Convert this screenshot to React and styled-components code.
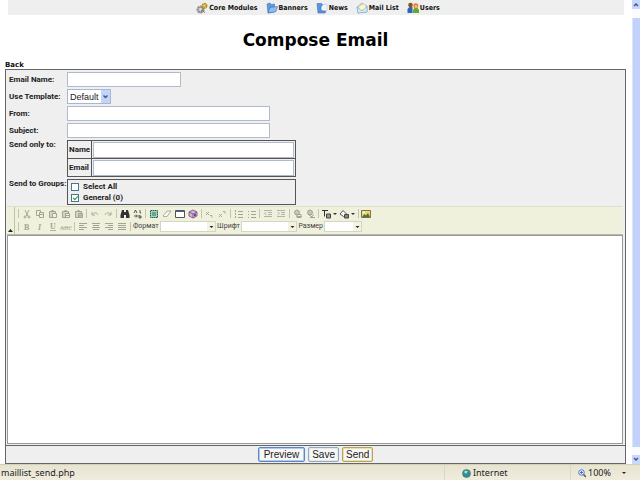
import React from "react";
import styled, { createGlobalStyle, css } from "styled-components";

const Global = createGlobalStyle`
  *, *::before, *::after { box-sizing: border-box; }
  body { margin: 0; background: #fff; color: #111; font-family: "Liberation Sans", Arial, sans-serif; }
`;

const Shell = styled.div`
  display: flex;
  flex-direction: column;
  min-height: 100vh;
`;
const Viewport = styled.div`
  display: flex;
  flex: 1;
`;
const Page = styled.main`
  display: flex;
  flex-direction: column;
  flex: 1;
  min-width: 0;
  padding: 0 6px 0 5px;
`;

const Nav = styled.nav`
  display: flex;
  justify-content: center;
  align-items: center;
  gap: 8px;
  height: 15px;
  margin: 0 2px 0 3px;
  padding-left: 4px;
  background: #efefef;
`;
const NavLink = styled.a`
  display: flex;
  align-items: center;
  gap: 1px;
  color: #111;
  font: bold 7px/14px "DejaVu Sans Condensed", "DejaVu Sans", Verdana, sans-serif;
  text-decoration: none;
  white-space: nowrap;
`;
const Title = styled.h1`
  margin: 15px 0 11px;
  color: #000;
  font: bold 17px/21px "DejaVu Sans", Verdana, sans-serif;
  text-align: center;
`;
const BackLink = styled.a`
  align-self: flex-start;
  color: #111;
  font: bold 7px/7px "DejaVu Sans", Verdana, sans-serif;
  text-decoration: none;
`;

const Panel = styled.form`
  display: flex;
  flex-direction: column;
  flex: 1;
  border: 1px solid #666;
  background: #efefef;
`;
const Fields = styled.div`
  display: grid;
  grid-template-columns: 58px 1fr;
  row-gap: 2px;
  padding: 2px 3px 1px;
`;
const labelFont = css`
  font: bold 8px/10px Roboto, Arial, sans-serif;
  color: #222;
  white-space: nowrap;
`;
const Label = styled.label`
  ${labelFont}
  padding-top: ${(p) => (p.$top ? 0 : 3)}px;
`;
const TextInput = styled.input`
  display: block;
  width: ${(p) => (p.$width ? `${p.$width}px` : "100%")};
  height: ${(p) => (p.$width ? 15 : 16)}px;
  padding: 0 2px;
  border: 1px solid #b0bccb;
  background: #fff;
  font: 10px/12px "Liberation Sans", Arial, sans-serif;
`;
const SelectWrap = styled.div`
  position: relative;
  width: 44px;
  height: 15px;
  svg {
    position: absolute;
    top: 1px;
    right: 1px;
    pointer-events: none;
  }
`;
const Select = styled.select`
  display: block;
  appearance: none;
  width: 100%;
  height: 15px;
  padding: 0 2px;
  border: 1px solid #a5b8d0;
  border-radius: 0;
  background: #fff;
  color: #222;
  font: 9px/12px "Liberation Sans", Arial, sans-serif;
`;
const Recipients = styled.table`
  width: 229px;
  border-collapse: collapse;
  th, td { border: 1px solid #555; }
  th { ${labelFont} width: 24px; padding: 0 1px; text-align: left; }
  td { padding: 1px 1px 0; }
`;
const Groups = styled.div`
  width: 229px;
  padding: 1px 3px;
  border: 1px solid #555;
`;
const Check = styled.label`
  ${labelFont}
  display: flex;
  align-items: center;
  gap: 4px;
  height: 11px;
`;
const CheckBox = styled.input`
  appearance: none;
  display: grid;
  place-items: center;
  width: 8px;
  height: 8px;
  margin: 0;
  border: 1px solid #4b7596;
  background: #fff;
  &:checked::after {
    content: "";
    width: 5px;
    height: 3px;
    border: solid #21a121;
    border-width: 0 0 1px 1px;
    transform: rotate(-45deg);
  }
`;

const Editor = styled.div`
  display: flex;
  flex-direction: column;
  flex: 1;
  margin: 0 2px 0 1px;
`;
const Toolbar = styled.div`
  display: flex;
  height: 29px;
  border-top: 1px solid #dedfcb;
  border-bottom: 1px solid #b9baa5;
  background: #f0f1dc;
`;
const Collapse = styled.button`
  display: flex;
  align-items: flex-end;
  width: 8px;
  padding: 0 0 1px 1px;
  border: 0;
  border-right: 1px solid #c2c3ad;
  background: #f0f1dc;
`;
const ToolRows = styled.div`
  display: grid;
  grid-template-rows: 13px 13px;
  padding: 0 0 0 3px;
`;
const ToolRow = styled.div`
  display: flex;
  align-items: center;
  justify-content: space-between;
  width: ${(p) => p.$width}px;
`;
const Divider = styled.span`
  width: 1px;
  height: 9px;
  background: #c3c4b1;
`;
const ToolGroup = styled.div`
  display: flex;
`;
const Tool = styled.button`
  display: flex;
  align-items: center;
  justify-content: center;
  width: ${(p) => (p.$wide ? 18 : 13)}px;
  height: 12px;
  padding: 0;
  border: 0;
  background: none;
  color: ${(p) => (p.$active ? "#333" : "#a3a497")};
`;
const Combo = styled.label`
  display: flex;
  align-items: center;
  gap: 1px;
  color: #444;
  font: 7px/11px Roboto, Arial, sans-serif;
`;
const ComboBox = styled.span`
  position: relative;
  svg { position: absolute; top: 1px; right: 1px; pointer-events: none; }
`;
const ComboSelect = styled.select`
  display: block;
  appearance: none;
  width: ${(p) => p.$width}px;
  height: 11px;
  border: 1px solid #d4d5c2;
  border-radius: 0;
  background: #fff;
  font: 7px/9px "Liberation Sans", Arial, sans-serif;
`;
const Message = styled.textarea`
  display: block;
  flex: 1;
  width: 100%;
  min-height: 60px;
  padding: 4px;
  border: 1px solid #999;
  background: #fff;
  font: 10px/13px "Liberation Sans", Arial, sans-serif;
  resize: none;
`;
const Actions = styled.div`
  display: flex;
  justify-content: center;
  gap: 3px;
  margin-top: 1px;
  padding: 1px 0;
  border-top: 1px solid #666;
`;
const tones = {
  focus: "#5d86c4",
  plain: "#8fa9c4",
  warm: "#b7a35b",
};
const Button = styled.button`
  height: 15px;
  padding: 0 ${(p) => (p.$roomy ? 5 : 3)}px;
  border: 1px solid ${(p) => tones[p.$tone]};
  border-radius: 2px;
  box-shadow: inset 0 0 0 1px ${(p) => (p.$tone === "focus" ? "#b3caf0" : p.$tone === "warm" ? "#f0dfa8" : "#e3e9f1")};
  background: #f7f7f5;
  color: #222;
  font: 10px/12px "Liberation Sans", Arial, sans-serif;
`;

const ScrollBar = styled.div`
  display: flex;
  flex-direction: column;
  width: 8px;
  background: #fafbfe;
`;
const ScrollButton = styled.button`
  display: grid;
  place-items: center;
  width: 8px;
  height: 9px;
  padding: 0;
  border: 0;
  background: #c8d7fb;
`;
const Thumb = styled.div`
  flex: 1;
  margin: 9px 0 8px;
  border-left: 1px solid #dce5fc;
  background: #c3d2fa;
`;

const StatusBar = styled.footer`
  display: grid;
  grid-template-columns: 1fr 126px 69px;
  height: 16px;
  border-top: 1px solid #d3cfbb;
  background: linear-gradient(#e7e4d1, #efecdd);
  color: #222;
  font: 9px/16px "Noto Sans", Tahoma, sans-serif;
`;
const StatusCell = styled.div`
  display: flex;
  align-items: center;
  gap: 2px;
  padding-left: ${(p) => p.$pad}px;
  border-right: ${(p) => (p.$last ? "0" : "1px solid #dcd8c5")};
`;
const Caret = styled.span`
  margin: 0 14px 0 auto;
  border: solid transparent;
  border-width: 2px 2px 0;
  border-top-color: #222;
`;

const Svg = ({ w = 10, h = 10, children }) => (
  <svg width={w} height={h} viewBox={`0 0 ${w} ${h}`} fill="none" stroke="currentColor" aria-hidden="true">
    {children}
  </svg>
);

const NavArt = {
  modules: (
    <Svg w={12} h={12}>
      <circle cx="4.5" cy="7.5" r="2.8" stroke="#8b8b84" strokeWidth="2.4" strokeDasharray="2 .5" fill="#ddd" />
      <circle cx="8.5" cy="3.8" r="2" stroke="#b58c1d" strokeWidth="2" strokeDasharray="1.600 .4" fill="#f6df7c" />
      <path d="M5 8l4 2.5" stroke="#777" />
    </Svg>
  ),
  banners: (
    <Svg w={12} h={12}>
      <path d="M1 2l3-1 1.500 1.500 3-.5v8L2 11z" fill="#5f97dc" stroke="#4479bd" strokeWidth=".6" />
      <path d="M2 11l2-5.500 7.500-1L10 9.500z" fill="#8ebdf2" stroke="#3d72b8" strokeWidth=".6" />
    </Svg>
  ),
  news: (
    <Svg w={12} h={12}>
      <path d="M4 2.500h7v6H5z" fill="#eef5fe" stroke="#b7c9e2" strokeWidth=".6" />
      <path d="M1 1.500h4.500l1 1.500-1.500 2v3.500l5 1L9 11H2z" fill="#5b92da" stroke="#3c70b8" strokeWidth=".6" />
    </Svg>
  ),
  mail: (
    <Svg w={12} h={12}>
      <path d="M1 5l5-4 5 3v6L2 11z" fill="#b9d9ee" stroke="#76a9ce" strokeWidth=".6" />
      <path d="M3 4l5-2 2 2-.5 3-4 1.500L3 7z" fill="#fff5c9" stroke="#d6c98a" strokeWidth=".5" />
      <path d="M1 5l5 4 5-4.500v5.500L2 11z" fill="#d7ebf8" stroke="#76a9ce" strokeWidth=".6" />
    </Svg>
  ),
  users: (
    <Svg w={12} h={12}>
      <path d="M.5 11V7l2-2h3v6z" fill="#2e64b3" stroke="none" />
      <path d="M6 11V8l1.500-2h3l1.500 2v3z" fill="#68a533" stroke="none" />
      <circle cx="3.500" cy="3" r="2.300" fill="#8f4f1b" stroke="none" />
      <circle cx="8.800" cy="3.800" r="2.500" fill="#d8862d" stroke="none" />
      <circle cx="9" cy="4.500" r="1.300" fill="#f6c37f" stroke="none" />
    </Svg>
  ),
};

const paste = (extra) => (
  <Svg>
    <path d="M1.500 2.500h6v6h-6zM3.500 1.500h2" fill="#d5d6c6" />
    <path d="M4.500 4.500h4v4h-4z" fill="#f0f1dc" />
    {extra}
  </Svg>
);
const lines = (xs) => (
  <Svg>
    {xs.map(([a, b], i) => (
      <path key={i} d={`M${a} ${1.5 + i * 2}H${b}`} />
    ))}
  </Svg>
);
const SmallText = styled.text`
  fill: currentColor;
  stroke: none;
  font: ${(p) => p.$style || "bold"} ${(p) => p.$size || 8}px "Liberation Serif", serif;
`;
const caret = <path d="M12 4h4l-2 2z" fill="currentColor" stroke="none" />;

const Art = {
  cut: <Svg><path d="M3 1l3 6M7 1L4 7" /><circle cx="3" cy="8" r="1" /><circle cx="7" cy="8" r="1" /></Svg>,
  copy: <Svg><path d="M1.500 1.500h4v5h-4z" /><path d="M4.500 3.500h4v5h-4zM5 5.500h3" fill="#f0f1dc" /></Svg>,
  paste: paste(null),
  pasteText: paste(<path d="M5 6.500h3" />),
  pasteWord: paste(<path d="M5 5l1 3 1-3 1 3" strokeWidth=".8" />),
  undo: <Svg><path d="M2 3v3h3M2 6c2-3 5-3 6 0" strokeWidth=".9" /></Svg>,
  redo: <Svg><path d="M8 3v3H5M8 6C6 3 3 3 2 6" strokeWidth=".9" /></Svg>,
  find: <Svg><path d="M2 1h2v2h2V1h2l1.500 5v3H6V6H4v3H.500V6z" fill="#333" stroke="none" /></Svg>,
  replace: <Svg><path d="M1 4l1.500-3L4 4M6 6v3h2V7H6M7 1v3h1M1 7h3M3 5.500L4.500 7 3 8.500" strokeWidth=".8" /></Svg>,
  table: <Svg><path d="M1.500 1.500h7v7h-7z" fill="#a7d5c4" stroke="#31584e" strokeDasharray="1.500 .5" /><path d="M3 3h4v4H3z" fill="#62a994" stroke="none" /></Svg>,
  eraser: <Svg><path d="M1 7l4-5h4L5 7.500H2z" fill="#fafaf0" stroke="#999" strokeWidth=".8" /></Svg>,
  window: <Svg><path d="M.5 1.500h9v7h-9z" fill="#fff" stroke="#555" /><path d="M1 2.500h8" stroke="#4a5f9a" /></Svg>,
  cube: <Svg><path d="M1 3l4-2 4 2v4L5 9 1 7z" fill="#d9b3da" stroke="#7d5486" strokeWidth=".9" /><path d="M1 3l4 2 4-2M5 5v4" stroke="#7d5486" strokeWidth=".9" /><path d="M6 5.500l2-1v2l-2 1z" fill="#5a3d6e" stroke="none" /></Svg>,
  sub: <Svg><path d="M2 3l3 3M5 3L2 6M6 6.500h2v2" strokeWidth=".9" /></Svg>,
  sup: <Svg><path d="M2 5l3 3M5 5L2 8M6 2.500h2v2" strokeWidth=".9" /></Svg>,
  ol: <Svg><path d="M1.500 1v2M1.500 4v2M1.500 7v2M4 2.500h5M4 5.500h5M4 8.500h5" /></Svg>,
  ul: <Svg><path d="M1 2.500h1M1 5.500h1M1 8.500h1M4 2.500h5M4 5.500h5M4 8.500h5" /></Svg>,
  outdent: <Svg><path d="M1 1.500h8M5 3.500h4M5 5.500h4M1 7.500h8M3.500 3L1.500 4.500l2 1.500" strokeWidth=".8" /></Svg>,
  indent: <Svg><path d="M1 1.500h8M5 3.500h4M5 5.500h4M1 7.500h8M1.500 3l2 1.500-2 1.500" strokeWidth=".8" /></Svg>,
  link: <Svg><circle cx="4" cy="3.500" r="2.500" fill="#c5c6b8" /><path d="M3.500 7.500h5M4 5.500h4v3H4z" /></Svg>,
  unlink: <Svg><circle cx="4" cy="3.500" r="2.500" fill="#c5c6b8" /><path d="M4 8.500h5M3 6l5 3M8 5.500L4 9" /></Svg>,
  color: <Svg w={16}><path d="M1 1.500h6M3.500 1.500v6" stroke="#333" /><path d="M5.500 5h4v4h-4z" fill="#999" stroke="#444" />{caret}</Svg>,
  fill: <Svg w={16}><path d="M1 5l3-3.500L7.500 5 4.500 7.500z" fill="#fff" stroke="#555" /><path d="M5.500 5.500h4v3.500h-4z" fill="#888" stroke="#444" />{caret}</Svg>,
  image: <Svg><path d="M.5 1.500h9v7h-9z" fill="#f4d76d" stroke="#7d744a" /><path d="M1 8l2.500-3L5 6.500 7 4l2 4z" fill="#4b7249" stroke="none" /><circle cx="3" cy="3.500" r="1" fill="#fff" stroke="none" /></Svg>,
  bold: <Svg><SmallText x="2" y="8">B</SmallText></Svg>,
  italic: <Svg><SmallText x="3" y="8" $style="italic bold">I</SmallText></Svg>,
  underline: <Svg><SmallText x="2" y="7">U</SmallText><path d="M2 8.500h6" strokeWidth=".8" /></Svg>,
  strike: <Svg w={12}><SmallText x="0" y="8" $style="normal" $size={6}>ABC</SmallText><path d="M0 5.500h12" strokeWidth=".4" /></Svg>,
  left: lines([[1, 9], [1, 6], [1, 9], [1, 6]]),
  center: lines([[1, 9], [2, 8], [1, 9], [2, 8]]),
  right: lines([[1, 9], [4, 9], [1, 9], [4, 9]]),
  justify: lines([[1, 9], [1, 9], [1, 9], [1, 9]]),
};

const active = new Set(["find", "replace", "table", "eraser", "window", "cube", "color", "fill", "image"]);
const topGroups = [
  ["cut", "copy", "paste", "pasteText", "pasteWord"],
  ["undo", "redo"],
  ["find", "replace"],
  ["table", "eraser", "window", "cube"],
  ["sub", "sup"],
  ["ol", "ul"],
  ["outdent", "indent"],
  ["link", "unlink"],
  ["color", "fill"],
  ["image"],
];
const bottomGroups = [
  ["bold", "italic", "underline", "strike"],
  ["left", "center", "right", "justify"],
];
const Tools = ({ groups }) =>
  groups.map((names) => (
    <React.Fragment key={names[0]}>
      <Divider />
      <ToolGroup>
        {names.map((n) => (
          <Tool key={n} type="button" aria-label={n} $active={active.has(n)} $wide={n === "color" || n === "fill"}>
            {Art[n]}
          </Tool>
        ))}
      </ToolGroup>
    </React.Fragment>
  ));

const ToolCombo = ({ label, width }) => (
  <Combo>
    {label}
    <ComboBox>
      <ComboSelect $width={width} />
      <Svg w={8} h={9}>
        <path d="M0 0h8v9H0z" fill="#f2f3e3" stroke="none" />
        <path d="M2.500 4h4l-2 2z" fill="#222" stroke="none" />
      </Svg>
    </ComboBox>
  </Combo>
);

const nav = [
  ["Core Modules", "modules"],
  ["Banners", "banners"],
  ["News", "news"],
  ["Mail List", "mail"],
  ["Users", "users"],
];

export default function App() {
  return (
    <>
      <Global />
      <Shell>
        <Viewport>
          <Page>
            <Nav>
              {nav.map(([text, icon]) => (
                <NavLink key={text} href="#">
                  {NavArt[icon]}
                  {text}
                </NavLink>
              ))}
            </Nav>
            <Title>Compose Email</Title>
            <BackLink href="#">Back</BackLink>
            <Panel onSubmit={(e) => e.preventDefault()}>
              <Fields>
                <Label htmlFor="email-name">Email Name:</Label>
                <TextInput id="email-name" $width={114} />
                <Label htmlFor="template">Use Template:</Label>
                <SelectWrap>
                  <Select id="template"><option>Default</option></Select>
                  <Svg w={9} h={13}>
                    <rect width="9" height="13" rx="1" fill="#c3d4fa" stroke="none" />
                    <path d="M2.500 5.500l2 2 2-2" stroke="#43577f" strokeWidth="1.500" />
                  </Svg>
                </SelectWrap>
                <Label htmlFor="from">From:</Label>
                <TextInput id="from" $width={203} />
                <Label htmlFor="subject">Subject:</Label>
                <TextInput id="subject" $width={203} />
                <Label as="span" $top>Send only to:</Label>
                <Recipients>
                  <tbody>
                    <tr>
                      <th><label htmlFor="to-name">Name</label></th>
                      <td><TextInput id="to-name" /></td>
                    </tr>
                    <tr>
                      <th><label htmlFor="to-email">Email</label></th>
                      <td><TextInput id="to-email" /></td>
                    </tr>
                  </tbody>
                </Recipients>
                <Label as="span" $top>Send to Groups:</Label>
                <Groups>
                  <Check><CheckBox type="checkbox" />Select All</Check>
                  <Check><CheckBox type="checkbox" defaultChecked />General (0)</Check>
                </Groups>
              </Fields>
              <Editor>
                <Toolbar>
                  <Collapse type="button" aria-label="Collapse toolbar">
                    <Svg w={5} h={4}><path d="M0 3h5L2.500 0z" fill="#222" stroke="none" /></Svg>
                  </Collapse>
                  <ToolRows>
                    <ToolRow $width={355}><Tools groups={topGroups} /></ToolRow>
                    <ToolRow $width={344}>
                      <Tools groups={bottomGroups} />
                      <Divider />
                      <ToolCombo label="Формат" width={56} />
                      <ToolCombo label="Шрифт" width={56} />
                      <ToolCombo label="Размер" width={38} />
                    </ToolRow>
                  </ToolRows>
                </Toolbar>
                <Message aria-label="Message" />
              </Editor>
              <Actions>
                <Button $tone="focus" $roomy>Preview</Button>
                <Button type="button" $tone="plain">Save</Button>
                <Button type="button" $tone="warm">Send</Button>
              </Actions>
            </Panel>
          </Page>
          <ScrollBar>
            <ScrollButton aria-label="Scroll up">
              <Svg w={6} h={5}><path d="M1 4l2-2 2 2" stroke="#40598d" strokeWidth="1.500" /></Svg>
            </ScrollButton>
            <Thumb />
            <ScrollButton aria-label="Scroll down">
              <Svg w={6} h={5}><path d="M1 1l2 2 2-2" stroke="#40598d" strokeWidth="1.500" /></Svg>
            </ScrollButton>
          </ScrollBar>
        </Viewport>
        <StatusBar>
          <StatusCell $pad={1}>maillist_send.php</StatusCell>
          <StatusCell $pad={17}>
            <Svg w={9} h={9}>
              <circle cx="4.500" cy="4.500" r="4" fill="#2f8f92" stroke="#40737c" strokeWidth=".6" />
              <path d="M2 3c1-2 3-1 4-1L4 5z" fill="#a8dfcf" stroke="none" />
            </Svg>
            Internet
          </StatusCell>
          <StatusCell $pad={7} $last>
            <Svg w={8} h={9}>
              <circle cx="3.500" cy="3.500" r="2.800" fill="#dcebff" stroke="#4f7fc4" />
              <path d="M2 3.500h3M3.500 2v3" stroke="#2f5fae" strokeWidth=".8" />
              <path d="M5.500 5.500L8 8" stroke="#555" strokeWidth="1.500" />
            </Svg>
            100%
            <Caret />
          </StatusCell>
        </StatusBar>
      </Shell>
    </>
  );
}
